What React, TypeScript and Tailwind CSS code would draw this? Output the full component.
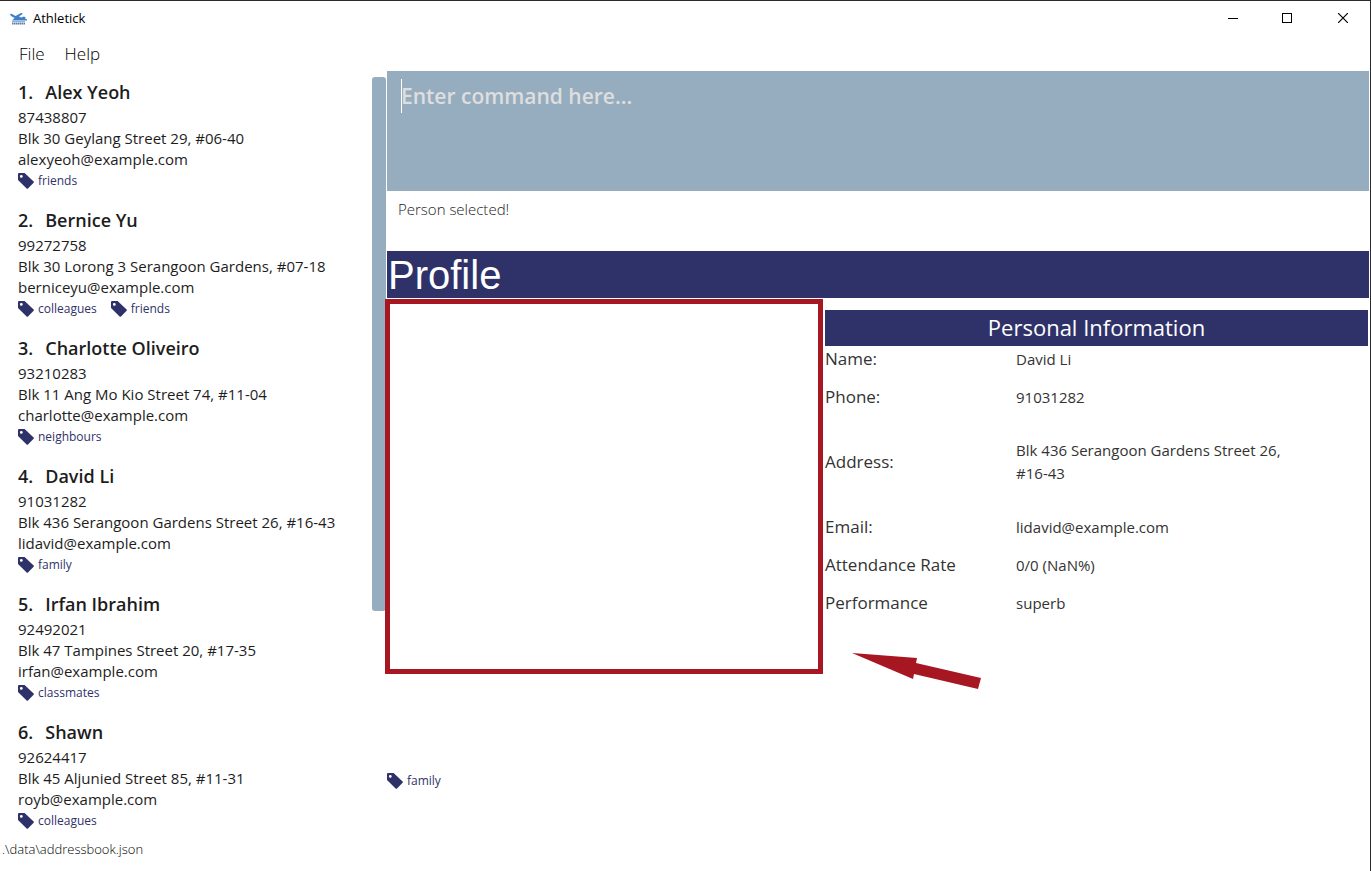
type Person = {
  name: string;
  phone: string;
  address: string;
  email: string;
  tags: string[];
};

const people: Person[] = [
  { name: "Alex Yeoh", phone: "87438807", address: "Blk 30 Geylang Street 29, #06-40", email: "alexyeoh@example.com", tags: ["friends"] },
  { name: "Bernice Yu", phone: "99272758", address: "Blk 30 Lorong 3 Serangoon Gardens, #07-18", email: "berniceyu@example.com", tags: ["colleagues", "friends"] },
  { name: "Charlotte Oliveiro", phone: "93210283", address: "Blk 11 Ang Mo Kio Street 74, #11-04", email: "charlotte@example.com", tags: ["neighbours"] },
  { name: "David Li", phone: "91031282", address: "Blk 436 Serangoon Gardens Street 26, #16-43", email: "lidavid@example.com", tags: ["family"] },
  { name: "Irfan Ibrahim", phone: "92492021", address: "Blk 47 Tampines Street 20, #17-35", email: "irfan@example.com", tags: ["classmates"] },
  { name: "Shawn", phone: "92624417", address: "Blk 45 Aljunied Street 85, #11-31", email: "royb@example.com", tags: ["colleagues"] },
];

const details = [
  { label: "Name:", value: "David Li" },
  { label: "Phone:", value: "91031282" },
  { label: "Address:", value: "Blk 436 Serangoon Gardens Street 26, #16-43", tall: true },
  { label: "Email:", value: "lidavid@example.com" },
  { label: "Attendance Rate", value: "0/0 (NaN%)" },
  { label: "Performance", value: "superb" },
];

function Tag({ text }: { text: string }) {
  return (
    <li className="flex items-center gap-1 text-[12px] leading-[22px] text-[#2f3269]">
      <svg className="size-4" viewBox="0 0 16 16" fill="currentColor" aria-hidden="true">
        <path
          fillRule="evenodd"
          d="M1 0H6.6L15.6 8.4Q16.3 9.1 15.6 9.8L10 15.5Q9.3 16.2 8.6 15.5L0 7V1Q0 0 1 0ZM3.3 2A1.4 1.4 0 1 0 3.3 4.8A1.4 1.4 0 1 0 3.3 2Z"
        />
      </svg>
      {text}
    </li>
  );
}

function Logo() {
  return (
    <svg className="h-3 w-[17px]" viewBox="0 0 17 12" aria-hidden="true">
      <path d="M0 1L1.5 0.8L5.5 3L11 0H12.5L12.3 1.2L8.8 3.6L11.5 4.6L14 3.6L15.6 4.6L15.2 6L17 6.2V7.4H2L4.6 5L1 3Z" fill="#3f7fc8" />
      <path d="M2 8.5H15" stroke="#8fb4dd" strokeWidth="1" />
      <path d="M2 10.5H15" stroke="#5f7da6" strokeWidth="2" strokeDasharray="1.6 0.4" />
    </svg>
  );
}

function TitleBar() {
  return (
    <header className="flex h-[35px] items-center justify-between">
      <h1 className="flex items-center gap-[6px] pl-[10px] text-[13px] text-black">
        <Logo />
        Athletick
      </h1>
      <div className="flex h-[34px] self-start text-black">
        <button aria-label="Minimize" className="flex w-[54px] items-center justify-center">
          <svg className="size-[10px]" viewBox="0 0 10 10" shapeRendering="crispEdges">
            <path d="M0 5.5H10" stroke="currentColor" />
          </svg>
        </button>
        <button aria-label="Maximize" className="flex w-[54px] items-center justify-center">
          <svg className="size-[10px]" viewBox="0 0 10 10" shapeRendering="crispEdges">
            <path d="M0.5 0.5H9.5V9.5H0.5Z" fill="none" stroke="currentColor" />
          </svg>
        </button>
        <button aria-label="Close" className="flex w-[56px] items-center justify-center pl-[2px]">
          <svg className="size-[10px]" viewBox="0 0 10 10">
            <path d="M0 0L10 10M10 0L0 10" stroke="currentColor" strokeWidth="1.2" />
          </svg>
        </button>
      </div>
    </header>
  );
}

function PersonList() {
  return (
    <ol className="flex flex-col gap-[15px] pt-2 pl-[18px]">
      {people.map((p, i) => (
        <li key={p.name} className="text-[15px] leading-[21px] text-[#1d1d1d]">
          <h2 className="flex gap-3 pb-[2px] text-[18px] leading-[26px] font-semibold">
            <span>{i + 1}.</span>
            <span>{p.name}</span>
          </h2>
          <p>{p.phone}</p>
          <p>{p.address}</p>
          <p>{p.email}</p>
          <ul className="flex gap-[14px]">
            {p.tags.map((t) => (
              <Tag key={t} text={t} />
            ))}
          </ul>
        </li>
      ))}
    </ol>
  );
}

function Profile() {
  return (
    <section>
      <h2 className="h-[47px] bg-[#2f3269] pl-px font-['Liberation_Sans',sans-serif] text-[40px] leading-[48px] text-white">
        Profile
      </h2>
      <div className="relative flex">
        <div className="mt-px -ml-[2px] h-[375px] w-[438px] shrink-0 border-5 border-[#a71722] bg-white" />
        <table className="mt-3 mr-px ml-[2px] flex-1 self-start text-left">
          <caption className="h-9 bg-[#2f3269] text-center text-[22px] leading-[34px] text-white">
            Personal Information
          </caption>
          <tbody className="text-[#333]">
            {details.map((d) => (
              <tr key={d.label} className={d.tall ? "h-[92px]" : "h-[38px]"}>
                <th scope="row" className="w-[35%] pb-3 text-[17px] leading-[26px] font-normal">
                  {d.label}
                </th>
                <td className="pr-20 pb-3 pl-px text-[15px] leading-[23px]">{d.value}</td>
              </tr>
            ))}
          </tbody>
        </table>
        <svg className="absolute top-[354px] left-[465px] h-[38px] w-[130px]" viewBox="0 0 130 38" fill="#a71722" aria-hidden="true">
          <path d="M0 1L65 6L64 11L129 26L126 37L62 22L61 27Z" />
        </svg>
      </div>
      <ul className="flex pt-24">
        <Tag text="family" />
      </ul>
    </section>
  );
}

export default function App() {
  return (
    <div className="flex min-h-screen flex-col border-t border-r border-[#2b2b2b] bg-white font-['Open_Sans','Noto_Sans',sans-serif]">
      <TitleBar />
      <nav className="flex h-[35px] items-center gap-[20px] pl-[19px] text-[17px] font-light text-black">
        <button>File</button>
        <button>Help</button>
      </nav>
      <div className="flex flex-1">
        <aside className="flex w-[386px] shrink-0 justify-between">
          <PersonList />
          <div className="mt-[6px] h-[534px] w-[14px] shrink-0 rounded-[3px] bg-[#96adbf]" />
        </aside>
        <main className="min-w-0 flex-1 pr-px pl-px">
          <div className="relative">
            <textarea
              aria-label="Command"
              placeholder="Enter command here..."
              className="block h-[120px] w-full resize-none border-0 bg-[#96adbf] px-[14px] py-[9px] text-[21px] leading-8 font-semibold text-white caret-transparent outline-none placeholder:text-[#dedede]"
            />
            <span className="absolute top-2 left-[14px] h-[34px] w-px bg-white" aria-hidden="true" />
          </div>
          <p className="h-[60px] px-[11px] pt-[7px] text-[15px] leading-[22px] font-light text-[#222]">Person selected!</p>
          <Profile />
        </main>
      </div>
      <footer className="h-[31px] pl-[2px] text-[13px] leading-[18px] font-light text-black">.\data\addressbook.json</footer>
    </div>
  );
}
